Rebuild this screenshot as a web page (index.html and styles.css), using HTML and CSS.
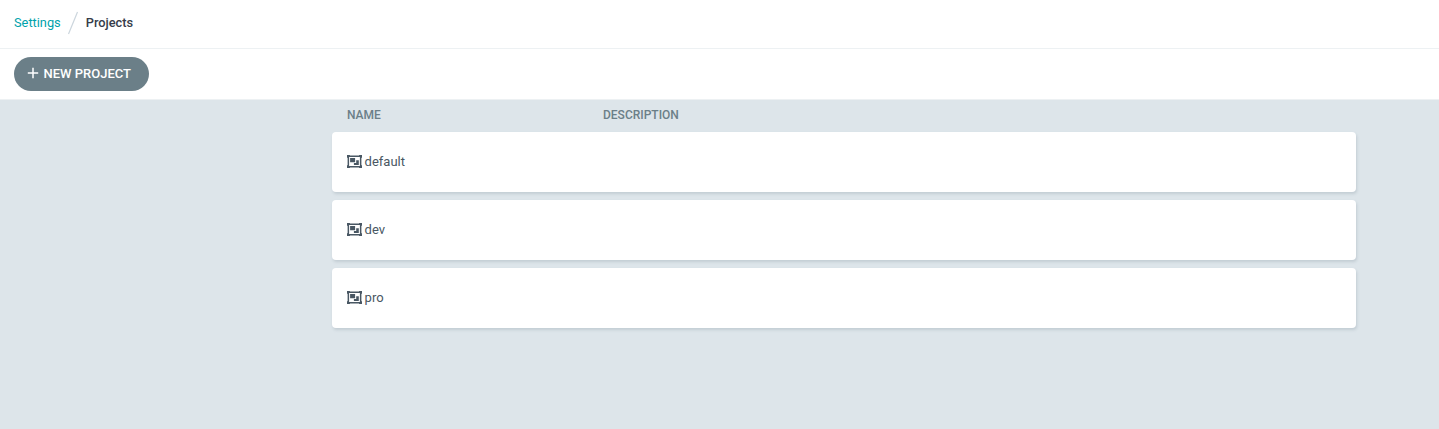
FILE: index.html
```html
<!DOCTYPE html>
<html lang="en">
<head>
<meta charset="utf-8">
<title>Projects</title>
<link rel="stylesheet" href="styles.css">
</head>
<body>
<svg width="0" height="0" class="defs">
  <symbol id="group" viewBox="0 0 15 13"><path fill-rule="evenodd" d="M0 0h2.9v.6h9.2V0H15v2.7h-.6v7.6h.6V13h-2.9v-.6H2.9v.6H0v-2.7h.6V2.7H0zM2.1 2v9h10.8V2z"/><path d="M3.1 3h5v4.2h-5zM9.2 5.2h2.6V10H6.9V8.1h2.3z"/></symbol>
</svg>
<header class="topbar">
  <nav class="breadcrumb">
    <a class="crumb-link">Settings</a>
    <svg class="slash" viewBox="0 0 12 24"><path d="M1.5 23L10.5 1"/></svg>
    <span class="crumb-current">Projects</span>
  </nav>
</header>
<div class="toolbar">
  <button class="new-btn"><svg class="plus" viewBox="0 0 12 12"><path d="M6 .8v10.4M.8 6h10.4"/></svg><span>NEW PROJECT</span></button>
</div>
<main class="content">
  <div class="table">
    <div class="table-head"><span>NAME</span><span>DESCRIPTION</span></div>
    <div class="row"><svg class="icon"><use href="#group"/></svg><span>default</span></div>
    <div class="row"><svg class="icon"><use href="#group"/></svg><span>dev</span></div>
    <div class="row"><svg class="icon"><use href="#group"/></svg><span>pro</span></div>
  </div>
</main>
</body>
</html>
```

FILE: styles.css
```css
* { box-sizing: border-box; }
body { margin: 0; height: 429px; display: flex; flex-direction: column; overflow: hidden; background: #dde5ea; color: #495763; font: 12.8px/18px Roboto, sans-serif; }
.defs { display: none; }
.topbar { height: 49px; background: #fff; border-bottom: 1px solid #edf1f3; }
.breadcrumb { display: flex; align-items: center; height: 46px; padding-left: 14px; }
.crumb-link { color: #00a2ab; }
.slash { width: 12px; height: 24px; margin: 0 6.4px 0 6.6px; fill: none; stroke: #ccd6dd; stroke-width: 1.2; }
.crumb-current { color: #363c4a; font-weight: 500; }
.toolbar { height: 51px; padding: 8px 14px; background: #fff; border-bottom: 1px solid #edf1f3; }
.new-btn { display: flex; align-items: center; width: 135px; height: 34px; padding: 0 0 0 12.5px; border: 0; border-radius: 17px; background: #6b7f88; color: #fff; font: 500 13px/18px Roboto, sans-serif; }
.plus { width: 12px; height: 12px; margin: 0 5px 2px 0; fill: none; stroke: #fff; stroke-width: 1.5; }
.content { padding-left: 332px; }
.table { width: 1024px; }
.table-head { display: grid; grid-template-columns: 256px 1fr; height: 32px; padding: 6px 15px; color: #6b7f88; font-size: 12px; font-weight: 500; }
.row { display: flex; align-items: center; gap: 2.6px; height: 60px; margin-bottom: 8px; padding: 0 15px; background: #fff; border-radius: 4px; box-shadow: 1px 2px 3px rgba(109, 127, 139, .23); font-size: 13px; }
.icon { width: 15px; height: 13px; margin-bottom: 1px; fill: #495763; }
```
